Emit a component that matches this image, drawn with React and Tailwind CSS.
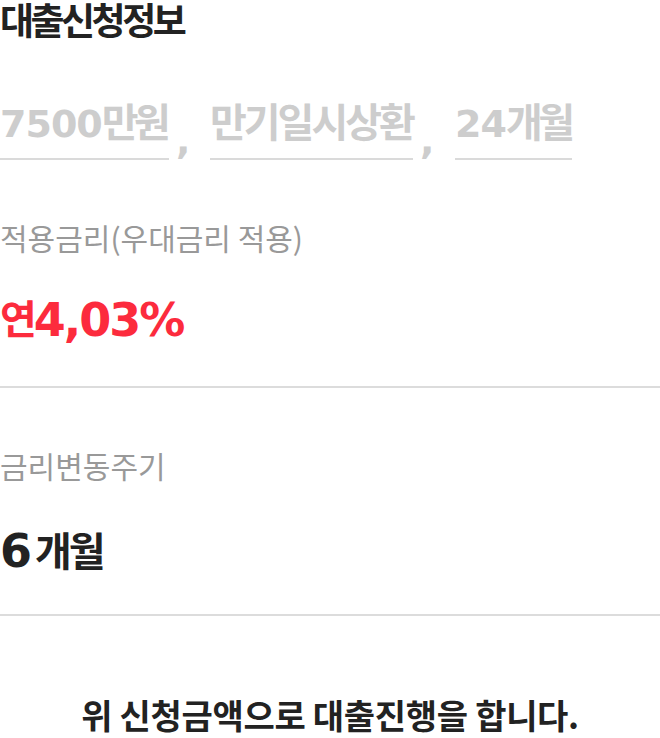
import React from "react";

const KR = { fontFamily: '"Noto Sans CJK KR", "Noto Sans", sans-serif' };
const NUM = { fontFamily: '"DejaVu Sans", "Noto Sans CJK KR", sans-serif' };

function Field({ w, num, kr, tight }) {
  return (
    <div className={`${w} shrink-0 border-b-2 border-[#dadada] pb-[16px]`}>
      <div className="h-[44px] text-[40px] leading-[44px] font-bold text-[#cdcdcd] whitespace-nowrap">
        {num && (
          <span style={NUM} className="text-[38px] leading-none tracking-[-1px]">
            {num}
          </span>
        )}
        <span className={tight ? "tracking-[-4.5px]" : "tracking-[-3px]"}>{kr}</span>
      </div>
    </div>
  );
}

function Comma({ w }) {
  return (
    <div
      style={NUM}
      className={`${w} shrink-0 mt-[24px] pl-[7px] text-[38px] leading-[38px] font-bold text-[#cdcdcd]`}
    >
      ,
    </div>
  );
}

export default function App() {
  return (
    <div style={KR} className="w-[660px] h-[738px] bg-white overflow-hidden">
      <div className="h-[38px] text-[37px] leading-[38px] font-bold text-[#222222] tracking-[-3.5px] whitespace-nowrap">
        대출신청정보
      </div>

      <div className="mt-[60px] flex items-start">
        <Field w="w-[169px]" num="7500" kr="만원" tight />
        <Comma w="w-[41px]" />
        <Field w="w-[203px]" kr="만기일시상환" />
        <Comma w="w-[42px]" />
        <Field w="w-[117px]" num="24" kr="개월" tight />
      </div>

      <div className="mt-[60px] h-[34px] text-[30px] leading-[34px] text-[#999999] whitespace-nowrap">
        적용금리(우대금리 적용)
      </div>
      <div className="mt-[43px] h-[46px] flex items-start font-bold text-[#fc2b3d]">
        <span className="text-[40px] leading-[40px] tracking-[-3px]">연</span>
        <span style={NUM} className="text-[46px] leading-[46px] tracking-[-2px]">
          4,03%
        </span>
      </div>
      <div className="mt-[43px] h-[2px] bg-[#dcdcdc]" />

      <div className="mt-[60px] h-[34px] text-[30px] leading-[34px] text-[#999999] whitespace-nowrap">
        금리변동주기
      </div>
      <div className="mt-[46px] h-[46px] flex items-start font-bold text-[#222222]">
        <span style={NUM} className="text-[46px] leading-[46px]">
          6
        </span>
        <span className="ml-[3px] mt-[1px] text-[40px] leading-[40px] tracking-[-3px]">개월</span>
      </div>
      <div className="mt-[40px] h-[2px] bg-[#dcdcdc]" />

      <div className="mt-[79px] h-[40px] text-center text-[34px] leading-[40px] font-bold text-[#222222] tracking-[-0.3px] whitespace-nowrap">
        위 신청금액으로 대출진행을 합니다.
      </div>
    </div>
  );
}
